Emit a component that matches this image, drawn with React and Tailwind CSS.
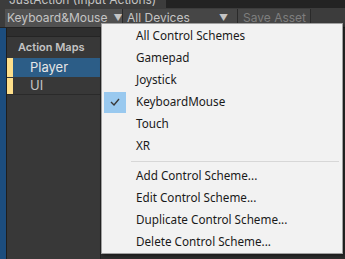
import React from "react";

const items1 = ["All Control Schemes", "Gamepad", "Joystick", "KeyboardMouse", "Touch", "XR"];
const items2 = ["Add Control Scheme...", "Edit Control Scheme...", "Duplicate Control Scheme...", "Delete Control Scheme..."];

function Row({ label, checked }) {
  return (
    <div className="h-[22px] flex items-center">
      <div className="w-[22px] h-[22px] ml-[2px] flex items-center justify-center">
        {checked && (
          <div className="w-[22px] h-[21px] bg-[#99c9ef] flex items-center justify-center">
            <svg width="10" height="8" viewBox="0 0 10 8">
              <path d="M1 4 L4 7 L9 1" stroke="#3a3a3a" strokeWidth="1.4" fill="none" />
            </svg>
          </div>
        )}
      </div>
      <span className="ml-[10px] text-[11.7px] text-[#1a1a1a] whitespace-nowrap">{label}</span>
    </div>
  );
}

export default function App() {
  return (
    <div className="w-[345px] h-[259px] relative overflow-hidden bg-[#2b2b2b] flex flex-col font-['Inter',sans-serif]">
      {/* tab bar */}
      <div className="h-[8px] flex shrink-0">
        <div className="w-[166px] bg-[#3c3c3c] overflow-hidden">
          <div className="text-[12px] leading-[12px] text-[#c4c4c4] ml-[9px] -mt-[6px] whitespace-nowrap">JustAction (Input Actions)</div>
        </div>
        <div className="flex-1 bg-[#232323]" />
      </div>
      {/* toolbar */}
      <div className="h-[20px] shrink-0 bg-[#3c3c3c] flex items-center border-b border-[#232323]">
        <div className="ml-[5px] w-[117px] h-[18px] bg-[#515151] flex items-center pl-[2px] text-[12px] text-[#c4c4c4] whitespace-nowrap">
          <span>Keyboard&amp;Mouse</span>
          <span className="ml-[6px] text-[9px]">▼</span>
        </div>
        <div className="w-px h-[18px] bg-[#2a2a2a]" />
        <div className="w-[114px] h-[18px] bg-[#464646] flex items-center pl-[4px] pr-[9px] text-[12px] text-[#c4c4c4] justify-between">
          <span>All Devices</span>
          <span className="text-[9px]">▼</span>
        </div>
        <div className="w-px h-[18px] bg-[#2a2a2a]" />
        <div className="w-[72px] h-[18px] bg-[#474747] flex items-center pl-[5px] text-[12px] text-[#7e7e7e]">Save Asset</div>
        <div className="w-px h-[18px] bg-[#2a2a2a]" />
        <div className="flex-1" />
      </div>
      {/* body */}
      <div className="flex-1 flex">
        <div className="w-[6px] bg-[#1c4d7e]" />
        <div className="w-px bg-[#1e1e1e]" />
        <div className="w-[94px] flex flex-col bg-[#383838] border-r border-[#232323]">
          <div className="h-[9px] bg-[#2e2e2e] border-b border-[#242424]" />
          <div className="h-[21px] flex items-center pl-[11px] text-[11px] font-semibold text-[#c4c4c4]">Action Maps</div>
          <div className="h-[19px] flex">
            <div className="w-[6px] bg-[#fedf8a]" />
            <div className="flex-1 bg-[#2c5d87] flex items-center pl-[17px] text-[13px] text-[#e6e6e6]">Player</div>
          </div>
          <div className="h-px bg-[#383838]" />
          <div className="h-[17px] flex border-b border-[#2a2a2a]">
            <div className="w-[6px] bg-[#fedf8a]" />
            <div className="flex-1 flex items-center pl-[17px] text-[13px] text-[#c4c4c4]">UI</div>
          </div>
          <div className="flex-1" />
        </div>
        <div className="flex-1 bg-[#2d2d2d]" />
      </div>

      {/* dropdown menu */}
      <div className="absolute left-[101px] top-[23px] w-[242px] h-[231px] bg-[#f2f2f2] border border-[#a0a0a0] shadow-[2px_2px_3px_rgba(0,0,0,0.4)] pt-[1px] font-['Noto_Sans',sans-serif]">
        {items1.map((t) => (
          <Row key={t} label={t} checked={t === "KeyboardMouse"} />
        ))}
        <div className="h-[8px] flex items-center pl-[29px] pr-[3px]">
          <div className="h-px flex-1 bg-[#d7d7d7]" />
        </div>
        {items2.map((t) => (
          <Row key={t} label={t} />
        ))}
      </div>
    </div>
  );
}
